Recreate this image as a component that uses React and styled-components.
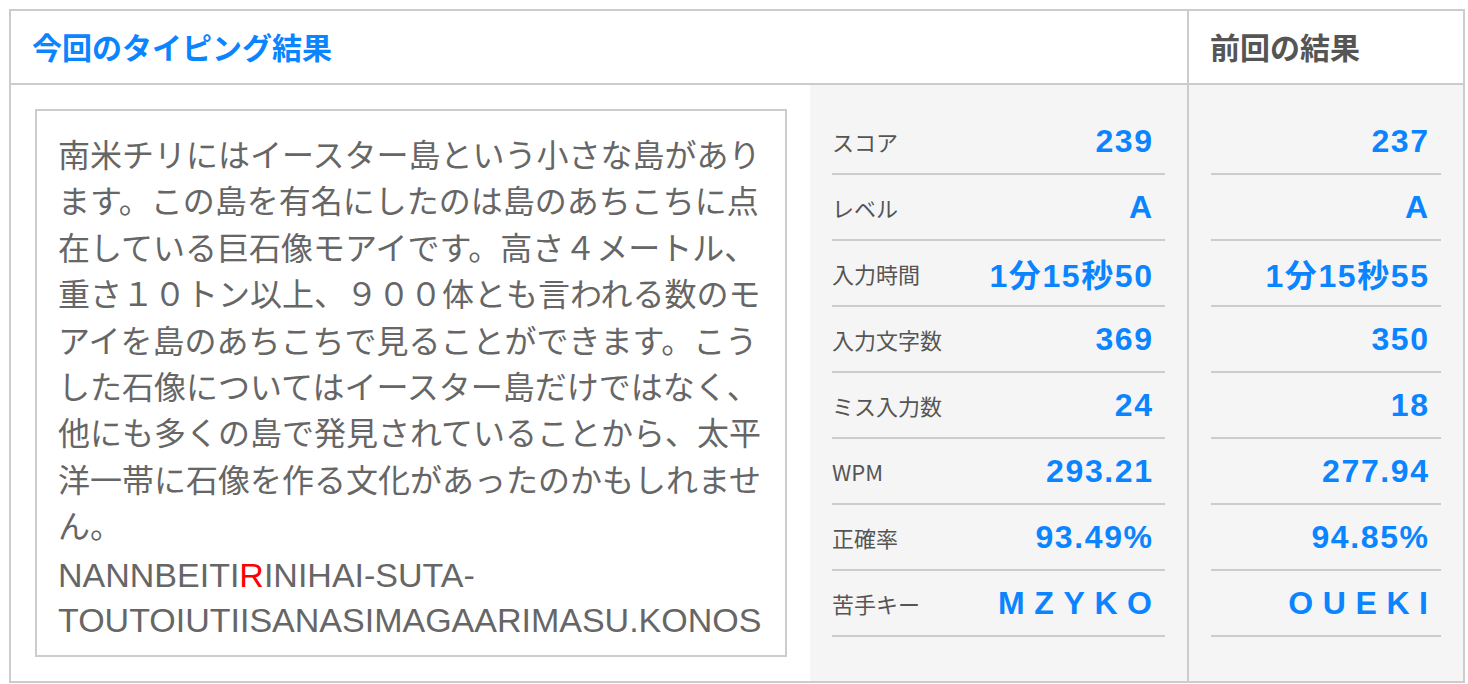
import React from 'react';
import styled, { createGlobalStyle } from 'styled-components';

const colors = {
  blue: '#0a84ff',
  border: '#cccccc',
  panel: '#f5f5f5',
  label: '#555555',
  text: '#666666',
  miss: '#ff0000',
};

const GlobalStyle = createGlobalStyle`
  html, body {
    margin: 0;
    padding: 0;
    background: #ffffff;
  }
  body {
    padding: 9px;
    font-family: "Liberation Sans", "Noto Sans CJK JP", sans-serif;
  }
`;

const Board = styled.div`
  box-sizing: border-box;
  width: 1456px;
  height: 674px;
  border: 2px solid ${colors.border};
  display: grid;
  grid-template-columns: 1176px 274px;
  column-gap: 2px;
  background: ${colors.border};
`;

const Column = styled.section`
  display: flex;
  flex-direction: column;
  background: #ffffff;
  min-height: 0;
`;

const Header = styled.h2`
  margin: 0;
  height: 74px;
  box-sizing: border-box;
  display: flex;
  align-items: center;
  padding: 0 22px 3px 21px;
  border-bottom: 2px solid ${colors.border};
  font-size: 30px;
  font-weight: 700;
  color: ${props => (props.current ? colors.blue : colors.label)};
  background: #ffffff;
`;

const Body = styled.div`
  flex: 1;
  display: flex;
  min-height: 0;
`;

const TextArea = styled.div`
  width: 799px;
  box-sizing: border-box;
  padding: 24px 23px 24px 24px;
  display: flex;
`;

const TextBox = styled.div`
  flex: 1;
  box-sizing: border-box;
  border: 2px solid ${colors.border};
  padding: 19px 21px 0 21px;
  overflow: hidden;
  color: ${colors.text};
`;

const Sentence = styled.p`
  margin: 0;
  font-family: "Noto Sans CJK JP", sans-serif;
  font-size: 32px;
  line-height: 46.4px;
`;

const Romaji = styled.p`
  margin: 5px 0 0;
  font-family: "Liberation Sans", Arial, sans-serif;
  font-size: 34px;
  line-height: 45px;
  overflow-wrap: anywhere;
`;

const Miss = styled.span`
  color: ${colors.miss};
`;

const StatsPanel = styled.div`
  flex: 1;
  box-sizing: border-box;
  background: ${colors.panel};
  padding: 24px 22px;
  display: flex;
  flex-direction: column;
`;

const StatRow = styled.div`
  height: 66px;
  box-sizing: border-box;
  border-bottom: 2px solid ${colors.border};
  display: flex;
  align-items: center;
  justify-content: ${props => (props.valueOnly ? 'flex-end' : 'space-between')};
`;

const Label = styled.span`
  font-family: "Noto Sans CJK JP", sans-serif;
  font-size: 22px;
  color: ${colors.label};
`;

const Value = styled.span`
  font-size: 32px;
  font-weight: 700;
  color: ${colors.blue};
  padding-right: 13px;
  letter-spacing: ${props => (props.spaced ? '0.3em' : '1.6px')};
  margin-right: ${props => (props.spaced ? '-0.3em' : '-1.6px')};
`;

const stats = [
  { label: 'スコア', current: '239', previous: '237' },
  { label: 'レベル', current: 'A', previous: 'A' },
  { label: '入力時間', current: '1分15秒50', previous: '1分15秒55' },
  { label: '入力文字数', current: '369', previous: '350' },
  { label: 'ミス入力数', current: '24', previous: '18' },
  { label: 'WPM', current: '293.21', previous: '277.94' },
  { label: '正確率', current: '93.49%', previous: '94.85%' },
  { label: '苦手キー', current: 'MZYKO', previous: 'OUEKI', spaced: true },
];

const sentence =
  '南米チリにはイースター島という小さな島があります。この島を有名にしたのは島のあちこちに点在している巨石像モアイです。高さ４メートル、重さ１０トン以上、９００体とも言われる数のモアイを島のあちこちで見ることができます。こうした石像についてはイースター島だけではなく、他にも多くの島で発見されていることから、太平洋一帯に石像を作る文化があったのかもしれません。';

const App = () => (
  <>
    <GlobalStyle />
    <Board>
      <Column>
        <Header current>今回のタイピング結果</Header>
        <Body>
          <TextArea>
            <TextBox>
              <Sentence>{sentence}</Sentence>
              <Romaji>
                NANNBEITI<Miss>R</Miss>INIHAI-SUTA-TOUTOIUTIISANASIMAGAARIMASU.KONOS
              </Romaji>
            </TextBox>
          </TextArea>
          <StatsPanel>
            {stats.map(stat => (
              <StatRow key={stat.label}>
                <Label>{stat.label}</Label>
                <Value spaced={stat.spaced}>{stat.current}</Value>
              </StatRow>
            ))}
          </StatsPanel>
        </Body>
      </Column>
      <Column>
        <Header>前回の結果</Header>
        <Body>
          <StatsPanel>
            {stats.map(stat => (
              <StatRow key={stat.label} valueOnly>
                <Value spaced={stat.spaced}>{stat.previous}</Value>
              </StatRow>
            ))}
          </StatsPanel>
        </Body>
      </Column>
    </Board>
  </>
);

export default App;
